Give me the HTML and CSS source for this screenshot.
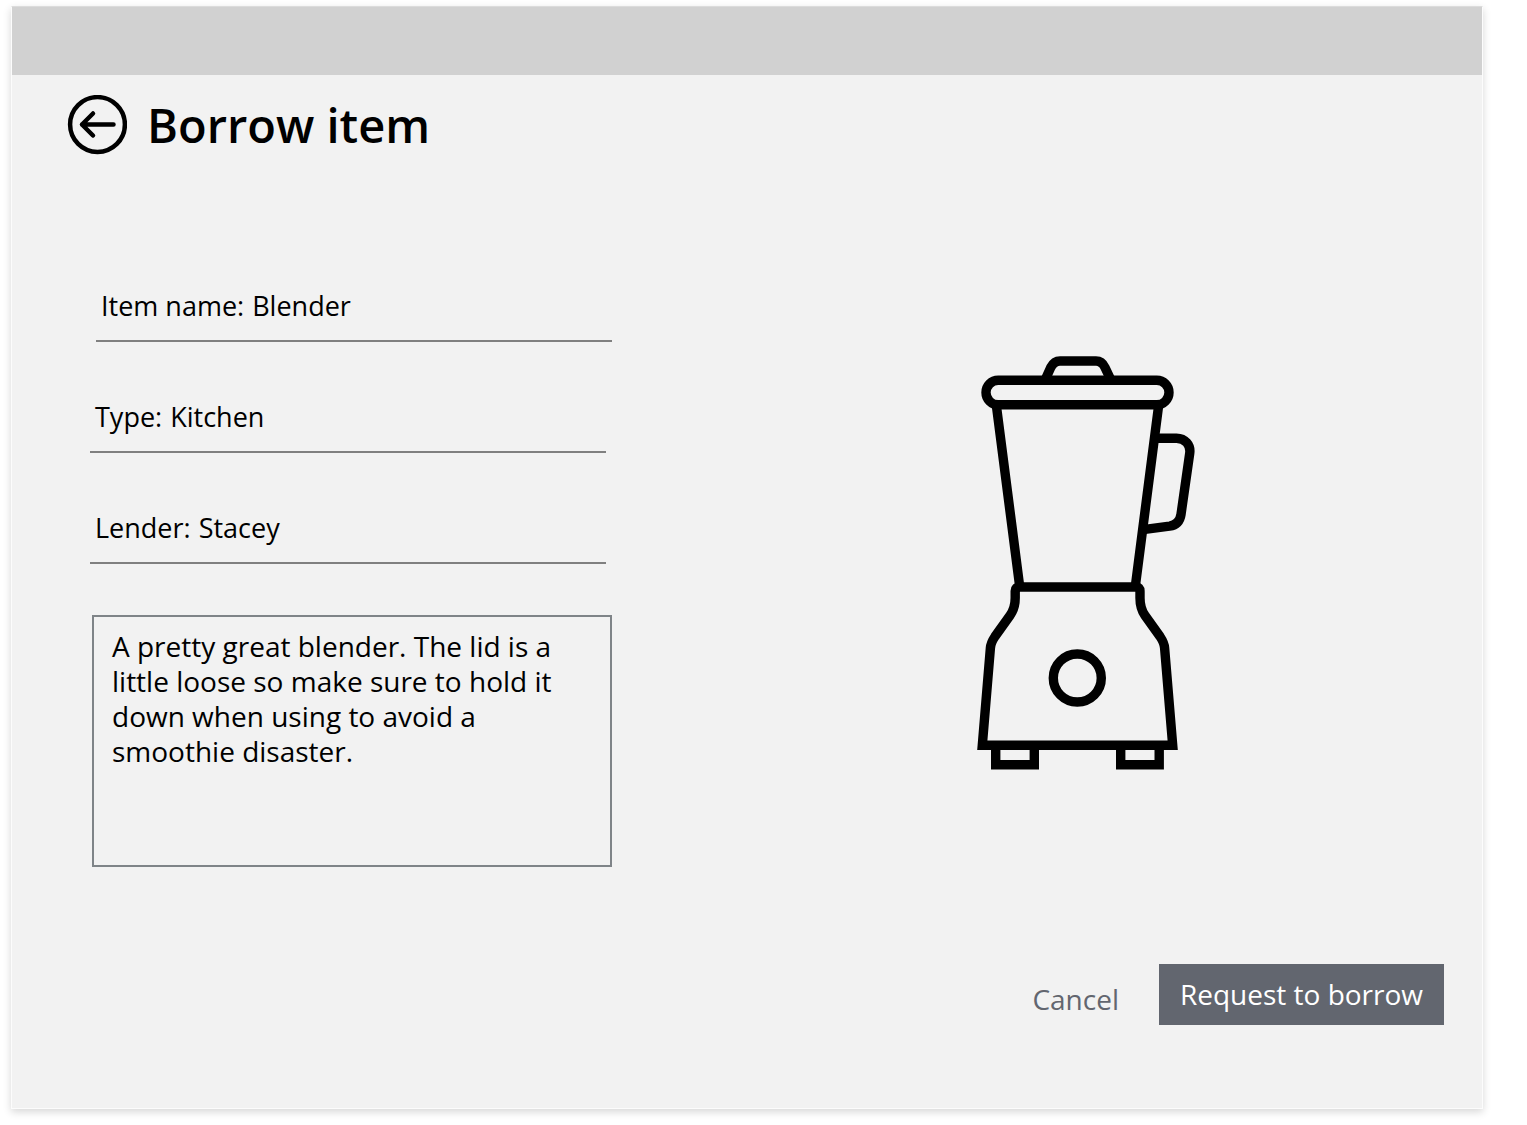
FILE: index.html
```html
<!DOCTYPE html>
<html lang="en">
<head>
<meta charset="utf-8">
<meta name="viewport" content="width=device-width, initial-scale=1">
<title>Borrow item</title>
<link rel="stylesheet" href="styles.css">
</head>
<body>
<div class="window">
  <div class="title-bar"></div>
  <header class="page-header">
    <button class="back" type="button" aria-label="Back">
      <svg viewBox="0 0 60 60" aria-hidden="true">
        <circle cx="30.500" cy="29.500" r="27.400"/>
        <path d="M46.500 29.500H15M26 18.500L15 29.500L26 40.500"/>
      </svg>
    </button>
    <h1 class="title">Borrow item</h1>
  </header>
  <form class="borrow-form">
    <div class="details">
      <div class="fields">
        <div class="field field-end">
          <label for="item-name">Item name:</label>
          <input id="item-name" type="text" value="Blender">
        </div>
        <div class="field">
          <label for="item-type">Type:</label>
          <input id="item-type" type="text" value="Kitchen">
        </div>
        <div class="field">
          <label for="lender">Lender:</label>
          <input id="lender" type="text" value="Stacey">
        </div>
        <textarea class="notes" aria-label="Description">A pretty great blender. The lid is a little loose so make sure to hold it down when using to avoid a smoothie disaster.</textarea>
      </div>
      <div class="picture">
        <svg class="blender" viewBox="0 0 220 416" role="img" aria-label="Blender">
          <path d="M70 23L74.700 12.500Q78 6 84 6H120Q126 6 129 12.500L134 23"/>
          <rect x="10" y="25.300" width="183" height="24.500" rx="12.200"/>
          <path d="M20.300 50L43.500 230M182.700 50L159.500 230"/>
          <path d="M181 83.300H200.500C209 83.300 215 90 213.700 98.500L205 159.500C204 166 200 170.200 193.500 171.200L169 174.300"/>
          <path d="M43.500 232H160Q164 232 164 236V243C164 250 165.500 255.500 169 260.500L184 281.500C187 286 188.300 288.500 188.600 293L196.700 390.300H6.300L14.400 293C14.700 288.500 16 286 19 281.500L34 260.500C37.500 255.500 39.200 250 39.200 243V236Q39.200 232 43.500 232Z"/>
          <circle cx="101.300" cy="323" r="24"/>
          <path d="M19.700 391V409.700H58.300V391M144.700 391V409.700H183.200V391"/>
        </svg>
      </div>
    </div>
    <div class="actions">
      <button class="cancel" type="button">Cancel</button>
      <button class="request" type="submit">Request to borrow</button>
    </div>
  </form>
</div>
</body>
</html>
```
FILE: styles.css
```css
* {
  box-sizing: border-box;
}

body {
  margin: 0;
  background: #fff;
  color: #000;
  font: 28px/35px "Open Sans", "Noto Sans", sans-serif;
}

.window {
  display: flex;
  flex-direction: column;
  min-height: calc(100vh - 22px);
  margin: 6px 44px 16px 11px;
  border: 1px solid #fcfcfc;
  border-top-color: #dcdcdc;
  background: #f2f2f2;
  box-shadow: 0 3px 8px rgba(0, 0, 0, 0.16);
}

.title-bar {
  height: 68px;
  background: #d1d1d1;
}

.page-header {
  display: flex;
  align-items: center;
  gap: 20px;
  padding: 20px 55px 0;
}

.back {
  width: 60px;
  height: 60px;
  padding: 0;
  border: 0;
  background: none;
}

.back svg {
  display: block;
  fill: none;
  stroke: #000;
  stroke-width: 4.5;
  stroke-linecap: round;
  stroke-linejoin: round;
}

.title {
  margin: 0;
  font-size: 47px;
  font-weight: 600;
  line-height: 60px;
}

.borrow-form {
  display: flex;
  flex: 1;
  flex-direction: column;
  justify-content: space-between;
  padding: 127px 0 83px 78px;
}

.details {
  display: grid;
  grid-template-columns: minmax(0, 522px) 1fr;
  column-gap: 78px;
}

.fields {
  display: flex;
  flex-direction: column;
  gap: 51px;
}

.field {
  display: flex;
  align-items: center;
  gap: 8px;
  width: 516px;
  max-width: 100%;
  height: 60px;
  padding: 0 5px 11px;
  border-bottom: 2px solid #808080;
  font-size: 27px;
}

.field input {
  flex: 1;
  min-width: 0;
  height: 35px;
  padding: 0;
  border: 0;
  background: none;
  color: inherit;
  font: inherit;
}

.field-end,
.notes {
  align-self: flex-end;
}

.notes {
  display: block;
  width: 520px;
  max-width: 100%;
  height: 252px;
  padding: 12px 40px 12px 18px;
  border: 2px solid #7f8488;
  border-radius: 0;
  background: none;
  color: inherit;
  font: inherit;
  resize: none;
}

.picture {
  display: flex;
  align-items: center;
  justify-content: center;
  padding-bottom: 24px;
}

.blender {
  width: 220px;
  height: 416px;
  fill: none;
  stroke: #000;
  stroke-width: 9.4;
}

.actions {
  display: flex;
  align-items: flex-end;
  justify-content: flex-end;
  gap: 16px;
  padding-right: 38px;
}

.cancel,
.request {
  border: 0;
  font: inherit;
}

.cancel {
  height: 51px;
  padding: 0 24px;
  background: none;
  color: #62666f;
}

.request {
  min-width: 285px;
  height: 61px;
  padding: 0 20px;
  background: #62666f;
  color: #fff;
}
```
